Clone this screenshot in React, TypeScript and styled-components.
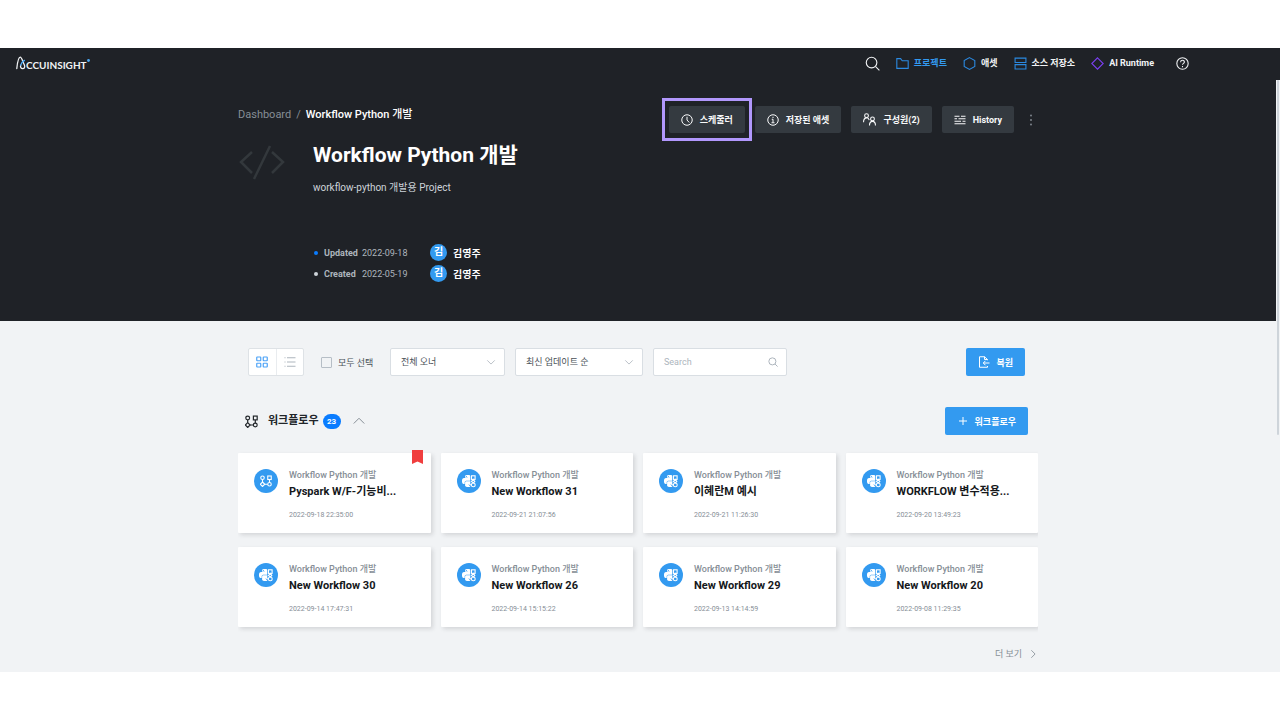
import React from 'react';
import styled, { createGlobalStyle } from 'styled-components';
import { SiPython } from 'react-icons/si';

const GlobalStyle = createGlobalStyle`
  *, *::before, *::after { box-sizing: border-box; }
  body {
    margin: 0;
    background: #fff;
    font-family: Roboto, "Noto Sans CJK KR", sans-serif;
    color: #212529;
  }
  button, input, select { font-family: inherit; }
  h1, h2, h3, p { margin: 0; }
  a { color: inherit; text-decoration: none; }
  svg { display: block; flex: none; }
`;

const Page = styled.div`
  padding: 48px 0;
`;

const AppFrame = styled.div`
  background: #f1f3f5;
`;

const Header = styled.header`
  display: flex;
  align-items: center;
  justify-content: space-between;
  height: 32px;
  padding: 0 91px 2px 16px;
  background: #1f2227;
`;

const Logo = styled.a`
  display: flex;
  align-items: center;
  color: #f1f3f5;
  font: 700 10px/16px Lato, sans-serif;
`;

const LogoText = styled.span`
  padding-top: 3px;
`;

const Nav = styled.nav`
  display: flex;
  align-items: center;
  gap: 16px;
`;

const NavLink = styled.a<{ $active?: boolean }>`
  display: flex;
  align-items: center;
  gap: 5px;
  font-size: 9px;
  line-height: 16px;
  font-weight: 700;
  color: ${(p) => (p.$active ? '#339af0' : '#f1f3f5')};
`;

const IconButton = styled.button`
  display: flex;
  align-items: center;
  justify-content: center;
  min-width: 14px;
  padding: 0;
  border: 0;
  background: none;
  color: #868e96;
`;

const NavIconButton = styled(IconButton)`
  color: #f1f3f5;
  &:last-child { margin-left: 5px; }
`;

const Body = styled.div`
  display: grid;
  grid-template-columns: 1fr 4px;
`;

const ScrollTrack = styled.div`
  display: flex;
  justify-content: center;
  background: #f1f3f5;
`;

const ScrollThumb = styled.div`
  width: 2px;
  height: 60%;
  border-radius: 1px;
  background: #ced4da;
`;

const Container = styled.div`
  max-width: 800px;
  margin: 0 auto;
`;

const Hero = styled.section`
  padding: 26px 0 37px;
  background: #1f2227;
  color: #fff;
`;

const HeroTop = styled.div`
  display: flex;
  align-items: flex-start;
  justify-content: space-between;
`;

const Breadcrumb = styled.nav`
  display: flex;
  gap: 5px;
  font-size: 11px;
  line-height: 18px;
  font-weight: 500;
`;

const Crumb = styled.a`
  color: #868e96;
  font-weight: 400;
`;

const Actions = styled.div`
  display: flex;
  align-items: center;
  gap: 10px;
`;

const ActionButton = styled.button<{ $highlighted?: boolean }>`
  position: relative;
  display: flex;
  align-items: center;
  gap: 7px;
  height: 27px;
  padding: 0 12px;
  border: 0;
  border-radius: 2px;
  background: #343a40;
  color: #f8f9fa;
  font-size: 9px;
  font-weight: 700;

  &::after {
    content: '';
    display: ${(p) => (p.$highlighted ? 'block' : 'none')};
    position: absolute;
    inset: -8px -7px;
    border: 3px solid #b197fc;
  }
`;

const HeroMain = styled.div`
  display: grid;
  grid-template-columns: 48px 1fr;
  column-gap: 27px;
  margin-top: 8px;
`;

const ProjectIcon = styled.div`
  padding-top: 3px;
  color: #33383c;
`;

const Title = styled.h1`
  font-size: 21px;
  line-height: 28px;
  font-weight: 700;
`;

const Description = styled.p`
  margin-top: 12px;
  font-size: 10px;
  line-height: 14px;
  color: #ced4da;
`;

const MetaList = styled.div`
  margin-top: 47px;
`;

const MetaRow = styled.div`
  display: grid;
  grid-template-columns: 4px 32px 62px 17px auto;
  align-items: center;
  column-gap: 6px;
  height: 21px;
  padding-left: 1px;
  font-size: 9px;
  color: #adb5bd;
`;

const Bullet = styled.span<{ $color: string }>`
  width: 4px;
  height: 4px;
  border-radius: 50%;
  background: ${(p) => p.$color};
`;

const Avatar = styled.span`
  width: 17px;
  height: 17px;
  border-radius: 50%;
  background: #339af0;
  color: #fff;
  font-size: 10px;
  line-height: 16px;
  font-weight: 700;
  text-align: center;
`;

const PersonName = styled.strong`
  font-size: 10px;
  color: #fff;
`;

const Content = styled.main`
  padding: 27px 0 10px;
`;

const Toolbar = styled.div`
  display: flex;
  align-items: center;
  height: 28px;
  padding: 0 13px 0 10px;
`;

const ViewToggle = styled.div`
  display: flex;
  width: 56px;
  height: 28px;
  border: 1px solid #dee2e6;
  border-radius: 2px;
  background: #fff;
`;

const ViewButton = styled.button<{ $active?: boolean }>`
  display: flex;
  flex: 1;
  align-items: center;
  justify-content: center;
  padding: 0;
  border: 0;
  background: none;
  color: ${(p) => (p.$active ? '#4da3f7' : '#adb5bd')};
  & + & { border-left: 1px solid #e9ecef; }
`;

const CheckLabel = styled.label`
  display: flex;
  align-items: center;
  gap: 6px;
  width: 86px;
  padding-left: 17px;
  font-size: 9px;
  color: #495057;
`;

const Checkbox = styled.input`
  appearance: none;
  width: 11px;
  height: 11px;
  margin: 0;
  border: 1px solid #b6bec6;
  border-radius: 1px;
  &:checked { background: #339af0; }
`;

const Field = styled.div<{ $width: number }>`
  display: flex;
  align-items: center;
  width: ${(p) => p.$width}px;
  height: 28px;
  margin-right: 10px;
  padding-right: 8px;
  border: 1px solid #d9dee3;
  border-radius: 2px;
  background: #fff;
  color: #adb5bd;
`;

const Select = styled.select`
  appearance: none;
  flex: 1;
  min-width: 0;
  height: 26px;
  padding: 0 0 0 10px;
  border: 0;
  background: none;
  color: #495057;
  font-size: 9px;
`;

const SearchInput = styled.input`
  flex: 1;
  min-width: 0;
  height: 26px;
  padding: 0 0 0 10px;
  border: 0;
  background: none;
  color: #495057;
  font-size: 9px;
  &::placeholder { color: #adb5bd; }
`;

const PrimaryButton = styled.button`
  display: flex;
  align-items: center;
  gap: 6px;
  height: 28px;
  margin-left: auto;
  padding: 0 12px;
  border: 0;
  border-radius: 2px;
  background: #339af0;
  color: #fff;
  font-size: 9px;
  font-weight: 700;
`;

const SectionHeader = styled.div`
  display: flex;
  align-items: center;
  height: 28px;
  margin-top: 31px;
  padding: 0 10px 0 7px;
`;

const SectionTitle = styled.h2`
  margin: 0 4px 0 10px;
  font-size: 11px;
  line-height: 16px;
  font-weight: 700;
`;

const CountBadge = styled.span`
  width: 18px;
  margin-right: 11px;
  border-radius: 8px;
  background: #0a7cff;
  color: #fff;
  font-size: 8px;
  line-height: 15px;
  font-weight: 700;
  text-align: center;
`;

const CardGrid = styled.div`
  display: grid;
  grid-template-columns: repeat(4, 1fr);
  gap: 14px 10px;
  margin-top: 18px;
  overflow-x: clip;
`;

const Card = styled.article`
  position: relative;
  display: flex;
  gap: 11px;
  height: 80px;
  padding: 15px 16px;
  border-radius: 1px;
  background: #fff;
  box-shadow: 2px 2px 4px rgba(33, 37, 41, 0.14);
`;

const CardIcon = styled.div`
  margin-top: 1px;
`;

const CardProject = styled.p`
  font-size: 9px;
  line-height: 14px;
  font-weight: 500;
  color: #868e96;
`;

const CardTitle = styled.h3`
  margin-top: 2px;
  font-size: 11px;
  line-height: 16px;
  font-weight: 700;
  color: #15181b;
`;

const CardDate = styled.p`
  margin-top: 9px;
  font-size: 7px;
  line-height: 12px;
  color: #868e96;
`;

const Bookmark = styled.div`
  position: absolute;
  top: -3px;
  right: 8px;
`;

const MoreLink = styled.a`
  display: flex;
  align-items: center;
  justify-content: flex-end;
  gap: 6px;
  margin-top: 19px;
  font-size: 9px;
  line-height: 16px;
  color: #868e96;
`;

type IconProps = { size?: number; box?: string; color?: string; width?: number; children: React.ReactNode };

const Icon = ({ size = 12, box = '0 0 24 24', color = 'currentColor', width = 2, children }: IconProps) => (
  <svg width={size} height={size} viewBox={box} fill="none" stroke={color} strokeWidth={width} aria-hidden="true">
    {children}
  </svg>
);

const SearchGlyph = ({ size, width }: { size: number; width: number }) => (
  <Icon size={size} width={width}>
    <circle cx="10.5" cy="10.5" r="8.5" />
    <path d="M17 17l6 6" />
  </Icon>
);

const Chevron = ({ d, size = 10 }: { d: string; size?: number }) => (
  <Icon size={size} width={2}>
    <path d={d} />
  </Icon>
);

const FlowShapes = () => (
  <>
    <circle cx="5" cy="5.5" r="3.5" />
    <rect x="15.5" y="2" width="7" height="7" />
    <path d="M5 14l4.500 4.500L5 23l-4.500-4.500z" />
    <circle cx="19" cy="18.500" r="3.500" />
    <path d="M5 9v5M19 9v6M9.500 18.500h6" />
  </>
);

const FlowBadge = () => (
  <svg width="24" height="24" viewBox="0 0 24 24" fill="none" aria-hidden="true">
    <circle cx="12" cy="12" r="12" fill="#339af0" />
    <svg x="6" y="6" width="12" height="12" viewBox="0 0 24 24" stroke="#fff" strokeWidth="2.2">
      <FlowShapes />
    </svg>
  </svg>
);

const PythonBadge = () => (
  <svg width="24" height="24" viewBox="0 0 24 24" fill="none" aria-hidden="true">
    <circle cx="12" cy="12" r="12" fill="#339af0" />
    <SiPython x="5" y="6" size={12} color="#fff" />
    <path d="M13.300 5.500h6.200v13.500h-6.200z" fill="#339af0" />
    <g stroke="#fff" strokeWidth="1.100">
      <rect x="14.500" y="6.800" width="3.600" height="3.600" />
      <path d="M16.300 10.400l-1.800 2 1.800 1.600 1.500-1.600zM12.500 15.700h1.900" />
      <circle cx="16.300" cy="15.900" r="1.900" />
    </g>
  </svg>
);

const cards = [
  { title: 'Pyspark W/F-기능비...', date: '2022-09-18 22:35:00', marked: true },
  { title: 'New Workflow 31', date: '2022-09-21 21:07:56' },
  { title: '이혜란M 예시', date: '2022-09-21 11:26:30' },
  { title: 'WORKFLOW 변수적용...', date: '2022-09-20 13:49:23' },
  { title: 'New Workflow 30', date: '2022-09-14 17:47:31' },
  { title: 'New Workflow 26', date: '2022-09-14 15:15:22' },
  { title: 'New Workflow 29', date: '2022-09-13 14:14:59' },
  { title: 'New Workflow 20', date: '2022-09-08 11:29:35' },
];

export default function App() {
  return (
    <Page>
      <GlobalStyle />
      <AppFrame>
        <Header>
          <Logo href="#" aria-label="Accuinsight">
            <svg width="10" height="14" viewBox="0 0 10 14" fill="none" strokeLinecap="round" aria-hidden="true">
              <path d="M.8 12.500C1.300 7.500 2.500 1.200 4.300 1.200c1.300 0 2.200 3.600 4 7.500 1 2.200.2 4-1.600 4s-2.600-1.700-2-3.600" stroke="#f1f3f5" strokeWidth="1.300" />
              <path d="M4.700 9.100c.4-1.700 1.700-3.400 3.700-4.700" stroke="#4dabf7" strokeWidth="1.300" />
            </svg>
            <LogoText>CCUINSIGHT</LogoText>
            <svg width="3" height="14" viewBox="0 0 3 14" aria-hidden="true">
              <circle cx="1.500" cy="4.500" r="1.400" fill="#4dabf7" />
            </svg>
          </Logo>
          <Nav>
            <NavIconButton aria-label="검색">
              <SearchGlyph size={15} width={1.8} />
            </NavIconButton>
            <NavLink href="#" $active>
              <Icon size={13} color="#2b8ae2">
                <path d="M1.500 3h7l3 4h11v14h-21z" />
              </Icon>
              프로젝트
            </NavLink>
            <NavLink href="#">
              <Icon size={13} color="#2b8ae2">
                <path d="M12 1.200l9.800 5.400v10.800L12 22.800l-9.800-5.400V6.600z" />
              </Icon>
              애셋
            </NavLink>
            <NavLink href="#">
              <Icon size={13} color="#2b8ae2">
                <path d="M2 2h20v8H2zM2 14h20v8H2z" />
              </Icon>
              소스 저장소
            </NavLink>
            <NavLink href="#">
              <Icon size={13} color="#7b3ff2">
                <path d="M12 1.500L22.500 12 12 22.500 1.500 12z" />
              </Icon>
              AI Runtime
            </NavLink>
            <NavIconButton aria-label="도움말">
              <Icon size={13}>
                <circle cx="12" cy="12" r="10.500" />
                <path d="M8.500 9.500c0-4.500 7-4.500 7-.3 0 2.800-3.500 2.500-3.500 5.300M12 16.500V19" />
              </Icon>
            </NavIconButton>
          </Nav>
        </Header>
        <Body>
          <div>
            <Hero>
              <Container>
                <HeroTop>
                  <Breadcrumb aria-label="경로">
                    <Crumb href="#">Dashboard</Crumb>
                    <Crumb as="span">/</Crumb>
                    <span>Workflow Python 개발</span>
                  </Breadcrumb>
                  <Actions>
                    <ActionButton $highlighted>
                      <Icon>
                        <circle cx="12" cy="12" r="10.500" />
                        <path d="M12 5.500V12l4.500 5" />
                      </Icon>
                      스케줄러
                    </ActionButton>
                    <ActionButton>
                      <Icon>
                        <circle cx="12" cy="12" r="10.500" />
                        <path d="M12 5.500v2.500M9.500 10.500H12V17M9 17.500h6" />
                      </Icon>
                      저장된 애셋
                    </ActionButton>
                    <ActionButton>
                      <Icon size={13}>
                        <circle cx="6.500" cy="5" r="3.500" />
                        <path d="M1 17c0-10 9-10 10.500-4" />
                        <circle cx="17.500" cy="11" r="3.500" />
                        <path d="M12 23c0-10 11-10 11 0" />
                      </Icon>
                      구성원(2)
                    </ActionButton>
                    <ActionButton>
                      <Icon>
                        <path d="M1 4.500h10M14 4.500h9M1 9.500h5M9 9.500h14M1 14.500h13M17 14.500h6M1 19.500h22" />
                      </Icon>
                      History
                    </ActionButton>
                    <IconButton aria-label="더 많은 작업">
                      <svg width="4" height="12" viewBox="0 0 4 12" fill="currentColor" aria-hidden="true">
                        <circle cx="2" cy="1.500" r=".9" />
                        <circle cx="2" cy="6" r=".9" />
                        <circle cx="2" cy="10.500" r=".9" />
                      </svg>
                    </IconButton>
                  </Actions>
                </HeroTop>
                <HeroMain>
                  <ProjectIcon>
                    <svg width="48" height="36" viewBox="0 0 48 36" fill="none" stroke="currentColor" strokeWidth="2.500" aria-hidden="true">
                      <path d="M14 8L3 18l11 11M34 8l11 10-11 11M32 2L16 35" />
                    </svg>
                  </ProjectIcon>
                  <div>
                    <Title>Workflow Python 개발</Title>
                    <Description>workflow-python 개발용 Project</Description>
                    <MetaList>
                      <MetaRow>
                        <Bullet $color="#0a7cff" />
                        <strong>Updated</strong>
                        <span>2022-09-18</span>
                        <Avatar>김</Avatar>
                        <PersonName>김영주</PersonName>
                      </MetaRow>
                      <MetaRow>
                        <Bullet $color="#ced4da" />
                        <strong>Created</strong>
                        <span>2022-05-19</span>
                        <Avatar>김</Avatar>
                        <PersonName>김영주</PersonName>
                      </MetaRow>
                    </MetaList>
                  </div>
                </HeroMain>
              </Container>
            </Hero>
            <Content>
              <Container>
                <Toolbar>
                  <ViewToggle>
                    <ViewButton $active aria-label="카드 보기">
                      <Icon size={12} width={2.4}>
                        <rect x="1.500" y="2" width="8" height="7.500" rx="1" />
                        <rect x="14.500" y="2" width="8" height="7.500" rx="1" />
                        <rect x="1.500" y="14.500" width="8" height="7.500" rx="1" />
                        <rect x="14.500" y="14.500" width="8" height="7.500" rx="1" />
                      </Icon>
                    </ViewButton>
                    <ViewButton aria-label="목록 보기">
                      <Icon size={12}>
                        <path d="M1 3.500h2M6 3.500h17M1 12h2M6 12h17M1 20.500h2M6 20.500h17" />
                      </Icon>
                    </ViewButton>
                  </ViewToggle>
                  <CheckLabel>
                    <Checkbox type="checkbox" />
                    모두 선택
                  </CheckLabel>
                  <Field $width={115}>
                    <Select aria-label="오너">
                      <option>전체 오너</option>
                    </Select>
                    <Chevron d="M3 8l9 9 9-9" />
                  </Field>
                  <Field $width={128}>
                    <Select aria-label="정렬">
                      <option>최신 업데이트 순</option>
                    </Select>
                    <Chevron d="M3 8l9 9 9-9" />
                  </Field>
                  <Field $width={134}>
                    <SearchInput type="text" placeholder="Search" aria-label="Search" />
                    <SearchGlyph size={10} width={2.4} />
                  </Field>
                  <PrimaryButton>
                    <Icon>
                      <path d="M19 8.500V7l-6-5.500H3v21h16V20M13 1.500V7h6M23 14H11M15 9.500L10.500 14l4.500 4.500" />
                    </Icon>
                    복원
                  </PrimaryButton>
                </Toolbar>
                <SectionHeader>
                  <Icon size={13} width={2.2}>
                    <FlowShapes />
                  </Icon>
                  <SectionTitle>워크플로우</SectionTitle>
                  <CountBadge>23</CountBadge>
                  <IconButton aria-label="접기">
                    <Chevron size={12} d="M1.500 17L12 6.500 22.500 17" />
                  </IconButton>
                  <PrimaryButton>
                    <Icon>
                      <path d="M12 4v16M4 12h16" />
                    </Icon>
                    워크플로우
                  </PrimaryButton>
                </SectionHeader>
                <CardGrid>
                  {cards.map((card) => (
                    <Card key={card.title}>
                      <CardIcon>{card.marked ? <FlowBadge /> : <PythonBadge />}</CardIcon>
                      <div>
                        <CardProject>Workflow Python 개발</CardProject>
                        <CardTitle>{card.title}</CardTitle>
                        <CardDate>{card.date}</CardDate>
                      </div>
                      {card.marked && (
                        <Bookmark>
                          <svg width="11" height="14" viewBox="0 0 11 14" aria-hidden="true">
                            <path d="M0 0h11v14l-5.500-2.500L0 14z" fill="#f03e3e" />
                          </svg>
                        </Bookmark>
                      )}
                    </Card>
                  ))}
                </CardGrid>
                <MoreLink href="#">
                  더 보기
                  <Chevron d="M8 3l9 9-9 9" />
                </MoreLink>
              </Container>
            </Content>
          </div>
          <ScrollTrack>
            <ScrollThumb />
          </ScrollTrack>
        </Body>
      </AppFrame>
    </Page>
  );
}
